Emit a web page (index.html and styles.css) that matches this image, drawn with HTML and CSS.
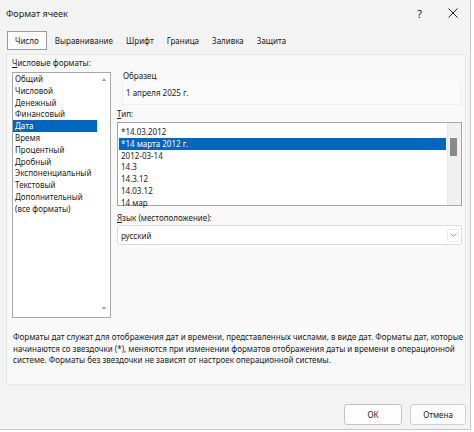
FILE: index.html
```html
<!DOCTYPE html>
<html lang="ru">
<head>
    <meta charset="UTF-8">
    <title>Формат ячеек</title>
    <link rel="stylesheet" href="styles.css">
</head>
<body>
    <div class="dialog">
        <div class="titlebar">
            <span class="title">Формат ячеек</span>
            <span class="help">?</span>
            <svg class="close" width="10" height="10" viewBox="0 0 10 10">
                <path d="M0.5 0.5 L9.5 9.5 M9.5 0.5 L0.5 9.5" stroke="#222" stroke-width="1"/>
            </svg>
        </div>

        <div class="tabs">
            <span class="tab active">Число</span>
            <span class="tab">Выравнивание</span>
            <span class="tab">Шрифт</span>
            <span class="tab">Граница</span>
            <span class="tab">Заливка</span>
            <span class="tab">Защита</span>
        </div>

        <div class="panel">
            <div class="columns">
                <div class="left">
                    <div class="label"><u>Ч</u>исловые форматы:</div>
                    <div class="listbox formats">
                        <div class="item">Общий</div>
                        <div class="item">Числовой</div>
                        <div class="item">Денежный</div>
                        <div class="item">Финансовый</div>
                        <div class="item selected">Дата</div>
                        <div class="item">Время</div>
                        <div class="item">Процентный</div>
                        <div class="item">Дробный</div>
                        <div class="item">Экспоненциальный</div>
                        <div class="item">Текстовый</div>
                        <div class="item">Дополнительный</div>
                        <div class="item">(все форматы)</div>
                        <span class="arrow up"></span>
                        <span class="arrow down"></span>
                    </div>
                </div>

                <div class="right">
                    <div class="sample-label">Образец</div>
                    <div class="sample">1 апреля 2025 г.</div>

                    <div class="label type-label"><u>Т</u>ип:</div>
                    <div class="listbox types">
                        <div class="type-items">
                            <div class="item">*14.03.2012</div>
                            <div class="item selected">*14 марта 2012 г.</div>
                            <div class="item">2012-03-14</div>
                            <div class="item">14.3</div>
                            <div class="item">14.3.12</div>
                            <div class="item">14.03.12</div>
                            <div class="item">14 мар</div>
                        </div>
                        <div class="scrollbar"><div class="thumb"></div></div>
                    </div>

                    <div class="label lang-label"><u>Я</u>зык (местоположение):</div>
                    <div class="dropdown">
                        <span>русский</span>
                        <span class="chevron-box">
                            <svg width="7" height="4" viewBox="0 0 7 4">
                                <path d="M0.5 0.5 L3.5 3.5 L6.5 0.5" fill="none" stroke="#999" stroke-width="1"/>
                            </svg>
                        </span>
                    </div>
                </div>
            </div>

            <p class="description">Форматы дат служат для отображения дат и времени, представленных числами, в виде дат. Форматы дат, которые<br>начинаются со звездочки (*), меняются при изменении форматов отображения даты и времени в операционной<br>системе. Форматы без звездочки не зависят от настроек операционной системы.</p>
        </div>

        <div class="footer">
            <button class="btn ok">ОК</button>
            <button class="btn cancel">Отмена</button>
        </div>
    </div>
</body>
</html>
```

FILE: styles.css
```css
body {
    margin: 0;
    background: #ffffff;
    font-family: "Noto Sans", "Open Sans", sans-serif;
    color: #1b1b1b;
}
.dialog {
    width: 470px;
    height: 429px;
    background: #f3f3f3;
    border-right: 1px solid #c8c8c8;
    border-bottom: 1px solid #c8c8c8;
}
.titlebar {
    display: flex;
    align-items: center;
    height: 26px;
    padding: 0 12px 0 6px;
    font-size: 9px;
}
.title {
    flex: 1;
}
.help {
    margin-right: 26px;
    font-size: 11px;
}
.tabs {
    display: flex;
    align-items: center;
    height: 20px;
    margin-top: 4px;
    padding-left: 7px;
    font-size: 8px;
}
.tab {
    padding: 0 6px;
    margin-right: 1px;
}
.tab.active {
    line-height: 17px;
    padding: 0 7px;
    margin-right: 2px;
    border: 1px solid #9a9a9a;
    background: #fbfbfb;
}
.panel {
    box-sizing: border-box;
    margin: 4px 0 0 6px;
    width: 460px;
    height: 331px;
    background: #f9f9f9;
    border: 1px solid #e6e6e6;
    padding: 1px 0 0 5px;
    font-size: 8px;
}
.columns {
    display: flex;
    gap: 6px;
}
.left {
    width: 99px;
}
.label {
    height: 12px;
    line-height: 12px;
    padding-top: 1px;
}
.label u {
    text-decoration-thickness: 1px;
}
.listbox {
    position: relative;
    background: #ffffff;
    border: 1px solid #a8a8a8;
}
.formats {
    height: 244px;
    margin-top: 3px;
}
.item {
    height: 11.8px;
    line-height: 11.8px;
    padding-left: 2px;
    white-space: nowrap;
}
.formats .item {
    width: 82px;
}
.item.selected {
    background: #0067c0;
    color: #ffffff;
}
.arrow {
    position: absolute;
    left: 89px;
    width: 0;
    height: 0;
    border-left: 2.5px solid transparent;
    border-right: 2.5px solid transparent;
}
.arrow.up {
    top: 5px;
    border-bottom: 3px solid #9a9a9a;
}
.arrow.down {
    bottom: 7px;
    border-top: 3px solid #9a9a9a;
}
.right {
    width: 345px;
}
.sample-label {
    height: 12px;
    line-height: 12px;
    margin-top: 14px;
    padding-left: 6px;
}
.sample {
    height: 22px;
    line-height: 22px;
    margin: 0 1px 0 5px;
    padding-left: 3px;
    background: #fbfbfb;
    border: 1px solid #efefef;
    border-top: none;
}
.type-label {
    margin-top: 2px;
}
.types {
    display: flex;
    height: 82px;
    margin-top: 2px;
}
.type-items {
    flex: 1;
    padding: 3px 1px 0 1px;
}
.scrollbar {
    width: 13px;
    background: #f0f0f0;
    border-left: 1px solid #e8e8e8;
}
.thumb {
    width: 7px;
    height: 18px;
    margin: 15px 0 0 2px;
    background: #8a8a8a;
}
.lang-label {
    margin-top: 5px;
}
.dropdown {
    display: flex;
    align-items: center;
    justify-content: space-between;
    height: 18px;
    margin-top: 1px;
    padding: 0 2px 0 3px;
    background: #ffffff;
    border: 1px solid #dcdcdc;
    border-radius: 2px;
}
.chevron-box {
    display: flex;
    align-items: center;
    justify-content: center;
    width: 10px;
    height: 11px;
    border: 1px solid #ececec;
    border-radius: 2px;
}
.description {
    margin: 13px 0 0 1px;
    line-height: 11.6px;
    white-space: nowrap;
}
.footer {
    display: flex;
    justify-content: flex-end;
    gap: 8px;
    padding: 19px 4px 0 0;
}
.btn {
    height: 21px;
    font-family: "Noto Sans", "Open Sans", sans-serif;
    font-size: 8px;
    color: #1b1b1b;
    background: #fdfdfd;
    border: 1px solid #d0d0d0;
    border-radius: 3px;
}
.btn.ok {
    width: 58px;
    border-color: #c4c4c4;
}
.btn.cancel {
    width: 56px;
}
```
